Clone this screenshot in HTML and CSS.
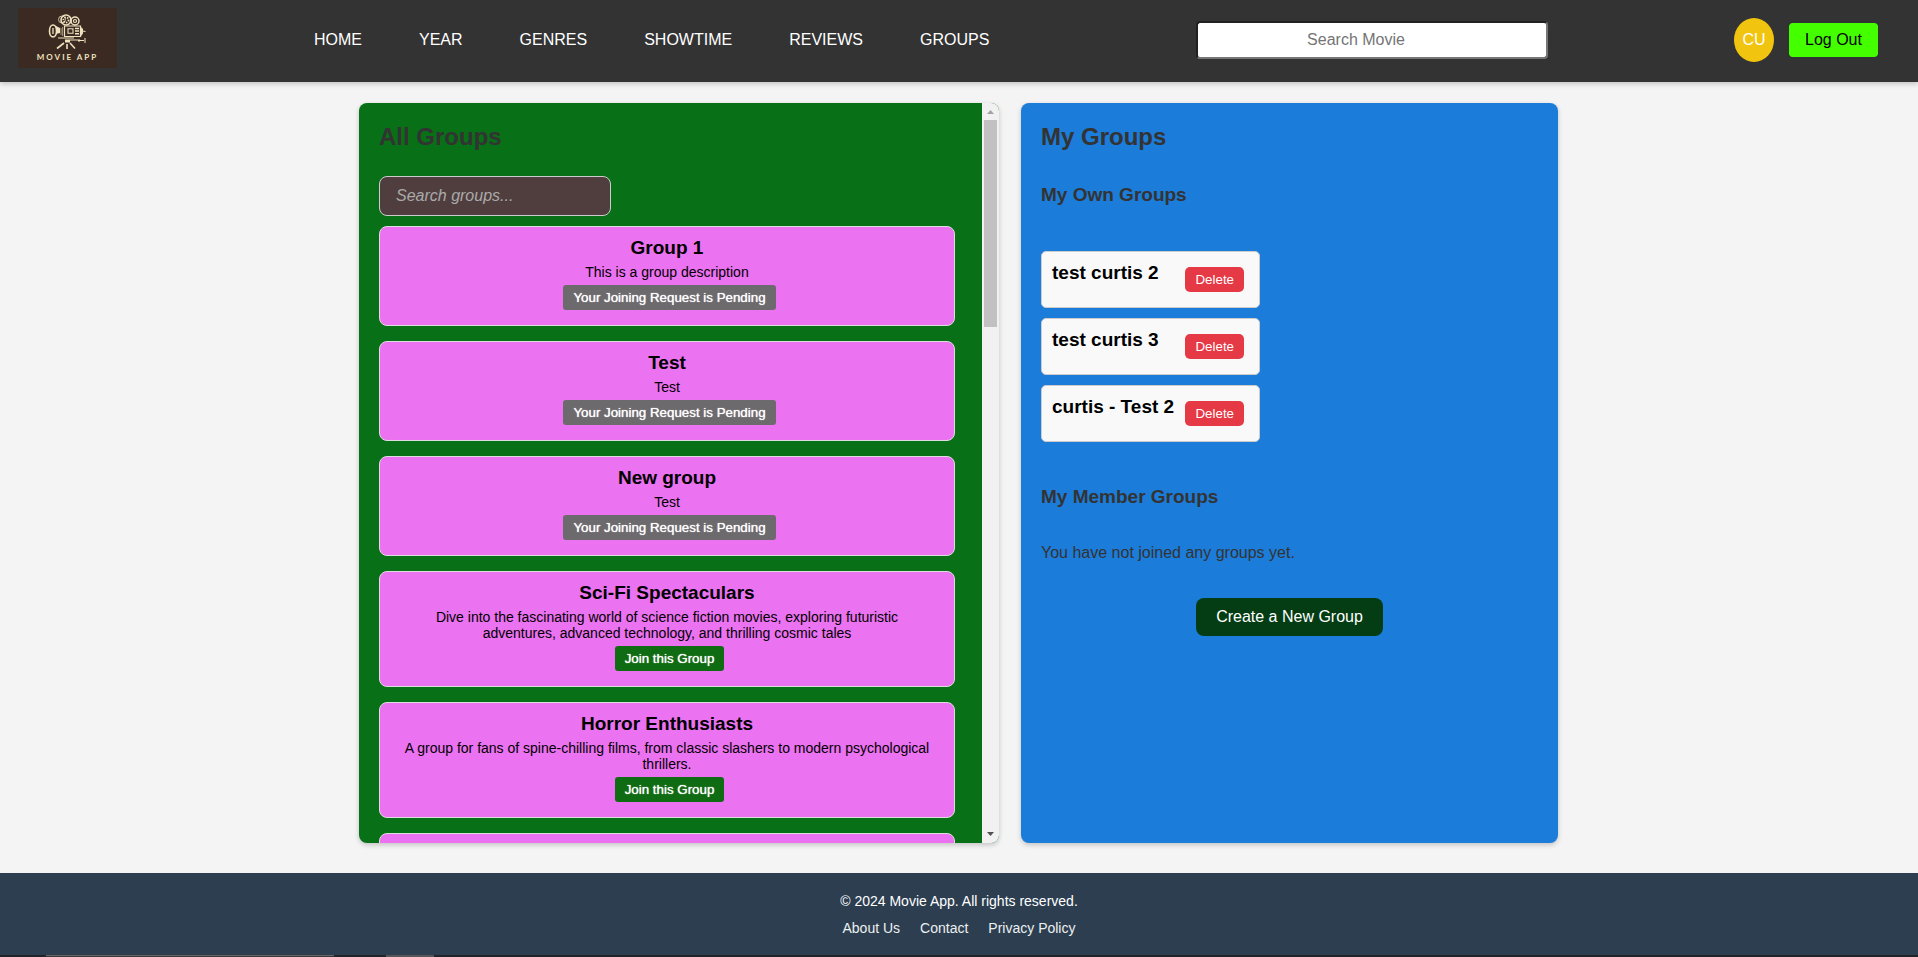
FILE: index.html
```html
<!DOCTYPE html>
<html lang="en">
<head>
<meta charset="utf-8">
<title>Movie App</title>
<link rel="stylesheet" href="styles.css">
</head>
<body>
<header class="header">
  <a class="logo" href="#" aria-label="Movie App home">
    <svg class="logo-mark" viewBox="0 0 40 36" fill="none" stroke="#efe2bf" aria-hidden="true">
      <circle cx="18" cy="6" r="5" stroke-width="1.6"/>
      <circle cx="18" cy="6" r="2.6" stroke-dasharray="1.4 1.2" stroke-width="1.8"/>
      <circle cx="14" cy="5.500" r="3.500" stroke-width="0.8"/>
      <circle cx="27" cy="7" r="4" stroke-width="1.500"/>
      <circle cx="27" cy="7" r="1.500" stroke-width="1.200"/>
      <ellipse cx="5" cy="17" rx="3.500" ry="6" stroke-width="1.600"/>
      <path d="M5 14v6" stroke-width="1.300"/>
      <path d="M6 11l6 3v5l-4 1c1.500-3 0-7-2-9z" fill="#efe2bf" stroke="none"/>
      <path d="M13 14v7M14.600 13v9" stroke="#a6977a" stroke-width="1"/>
      <path d="M16.500 12h16v10.500h-16z" stroke-width="1.200"/>
      <path d="M20 14.800h5v4.500h-5z" stroke-width="1.100"/>
      <path d="M27 14.500h4M27 17h4M27 19.800h4" stroke-width="1.500"/>
      <path d="M33 13.500l1.500 1.500v4.500l-1.500 2zM34.500 17l3 .5" fill="#efe2bf" stroke-width="1"/>
      <path d="M10 24h16M17 26h13M30 26.500h6M37 24v5M31 25v3" stroke-width="1"/>
      <path d="M17 26h5v2.500h-5z" fill="#efe2bf" stroke="none"/>
      <path d="M16 29l-7 5.500M19 30v5M22 29l5 5.500" stroke-width="1.600"/>
    </svg>
    <span class="logo-text">MOVIE APP</span>
  </a>
  <nav class="nav" aria-label="Main">
    <a href="#">HOME</a>
    <a href="#">YEAR</a>
    <a href="#">GENRES</a>
    <a href="#">SHOWTIME</a>
    <a href="#">REVIEWS</a>
    <a href="#">GROUPS</a>
  </nav>
  <input class="movie-search" type="text" placeholder="Search Movie" aria-label="Search Movie">
  <div class="account">
    <span class="avatar">CU</span>
    <button class="logout" type="button">Log Out</button>
  </div>
</header>

<main class="main">
  <section class="panel panel-all">
    <div class="panel-scroll">
      <h2>All Groups</h2>
      <input class="group-search" type="text" placeholder="Search groups..." aria-label="Search groups">
      <ul class="groups">
        <li class="group">
          <h3>Group 1</h3>
          <p>This is a group description</p>
          <button class="join pending" type="button">Your Joining Request is Pending</button>
        </li>
        <li class="group">
          <h3>Test</h3>
          <p>Test</p>
          <button class="join pending" type="button">Your Joining Request is Pending</button>
        </li>
        <li class="group">
          <h3>New group</h3>
          <p>Test</p>
          <button class="join pending" type="button">Your Joining Request is Pending</button>
        </li>
        <li class="group">
          <h3>Sci-Fi Spectaculars</h3>
          <p>Dive into the fascinating world of science fiction movies, exploring futuristic adventures, advanced technology, and thrilling cosmic tales</p>
          <button class="join" type="button">Join this Group</button>
        </li>
        <li class="group">
          <h3>Horror Enthusiasts</h3>
          <p>A group for fans of spine-chilling films, from classic slashers to modern psychological thrillers.</p>
          <button class="join" type="button">Join this Group</button>
        </li>
        <li class="group group-blank"></li>
      </ul>
    </div>
    <div class="scrollbar" aria-hidden="true">
      <svg class="arrow" viewBox="0 0 17 17"><path d="M5 11l3.500-4 3.500 4z" fill="#a3a3a3"/></svg>
      <div class="thumb"></div>
      <svg class="arrow arrow-down" viewBox="0 0 17 17"><path d="M5 6l3.500 4L12 6z" fill="#505050"/></svg>
    </div>
  </section>

  <section class="panel panel-mine">
    <h2>My Groups</h2>
    <h3>My Own Groups</h3>
    <ul class="own">
      <li class="own-item"><h4>test curtis 2</h4><button class="delete" type="button">Delete</button></li>
      <li class="own-item"><h4>test curtis 3</h4><button class="delete" type="button">Delete</button></li>
      <li class="own-item"><h4>curtis - Test 2</h4><button class="delete" type="button">Delete</button></li>
    </ul>
    <h3>My Member Groups</h3>
    <p class="empty">You have not joined any groups yet.</p>
    <button class="create" type="button">Create a New Group</button>
  </section>
</main>

<footer class="footer">
  <p>© 2024 Movie App. All rights reserved.</p>
  <nav class="footer-links" aria-label="Footer">
    <a href="#">About Us</a>
    <a href="#">Contact</a>
    <a href="#">Privacy Policy</a>
  </nav>
</footer>
<div class="taskbar" aria-hidden="true"><span class="task-search"></span><span class="task-item"></span></div>
</body>
</html>
```

FILE: styles.css
```css
* {
  box-sizing: border-box;
}

body {
  margin: 0;
  min-height: 100vh;
  display: flex;
  flex-direction: column;
  background: #f4f4f4;
  color: #333;
  font-family: "Liberation Sans", Arial, sans-serif;
  font-size: 16px;
}

h2, h3, h4, p, ul {
  margin: 0;
  padding: 0;
}

h3, h4 {
  font-size: 19px;
  line-height: 22px;
}

ul {
  list-style: none;
}

a {
  color: inherit;
  text-decoration: none;
}

button {
  border: 0;
  color: #fff;
  font-family: inherit;
  cursor: pointer;
}

/* Header */
.header {
  display: flex;
  align-items: flex-start;
  padding: 8px 40px 14px 18px;
  background: #333;
  color: #fff;
  box-shadow: 0 2px 5px rgba(0, 0, 0, 0.2);
}

.logo {
  display: flex;
  flex-direction: column;
  align-items: center;
  width: 99px;
  height: 60px;
  padding-top: 6px;
  background: #3b2a21;
  color: #efe2bf;
}

.logo-mark {
  width: 40px;
  height: 36px;
}

.logo-text {
  font-family: Lato, sans-serif;
  font-size: 8px;
  font-weight: 700;
  line-height: 14px;
  letter-spacing: 2px;
}

.nav {
  display: flex;
  gap: 57px;
  margin-left: 197px;
  padding-top: 23px;
}

.movie-search {
  width: 352px;
  height: 38px;
  margin: 13px 0 0 auto;
  padding: 0 40px 0 8px;
  border: 2px inset #767676;
  border-radius: 4px;
  background: #fff;
  font: 16px "Liberation Sans", Arial, sans-serif;
  text-align: center;
}

.account {
  display: flex;
  align-items: center;
  gap: 15px;
  margin-left: 186px;
  padding-top: 10px;
}

.avatar {
  display: flex;
  align-items: center;
  justify-content: center;
  width: 40px;
  height: 44px;
  border-radius: 50%;
  background: #f1c40f;
}

.logout {
  width: 89px;
  height: 34px;
  border-radius: 4px;
  background: #4f0;
  color: #000;
  font-size: 16px;
}

/* Panels */
.main {
  flex: 1;
  display: grid;
  grid-template-columns: 640fr 537fr;
  gap: 22px;
  width: 100%;
  max-width: 1200px;
  margin: 0 auto;
  padding: 21px 1px 30px 0;
}

.panel {
  min-width: 0;
  border-radius: 8px;
  box-shadow: 0 2px 5px rgba(0, 0, 0, 0.2);
}

.panel h2 {
  font-size: 24px;
  line-height: 28px;
}

.panel-all {
  display: flex;
  overflow: hidden;
  background: #087016;
}

.panel-scroll {
  flex: 1;
  height: 740px;
  padding: 20px 27px 0 20px;
  overflow-y: auto;
  scrollbar-width: none;
}

.group-search {
  display: block;
  width: 232px;
  height: 40px;
  margin: 25px 0 10px;
  padding: 0 16px;
  border: 1px solid #ccc;
  border-radius: 8px;
  background: #503e3e;
  color: #fff;
  font: italic 16px "Liberation Sans", Arial, sans-serif;
}

.group-search::placeholder {
  color: #aaa;
}

.groups {
  display: grid;
  gap: 15px;
}

.group {
  padding: 10px 20px 15px;
  border: 1px solid #ddd;
  border-radius: 8px;
  background: #eb72f0;
  color: #000;
  text-align: center;
}

.group p {
  margin: 5px 0;
  font-size: 14px;
  line-height: 16px;
}

.group-blank {
  height: 100px;
}

.join {
  height: 25px;
  margin-left: 5px;
  padding: 0 10px;
  border-radius: 3px;
  background: #106c12;
  font-weight: 500;
  text-shadow: 0 0 1px #fff;
  vertical-align: top;
}

.pending {
  background: #6c6a6c;
}

.scrollbar {
  display: flex;
  flex-direction: column;
  align-items: center;
  width: 17px;
  background: #f1f1f1;
}

.arrow {
  width: 17px;
  height: 17px;
}

.arrow-down {
  margin-top: auto;
}

.thumb {
  width: 13px;
  height: 28%;
  background: #c1c1c1;
}

.panel-mine {
  display: flex;
  flex-direction: column;
  align-items: flex-start;
  padding: 20px;
  background: #1c7cd9;
}

.panel-mine h3 {
  margin-top: 33px;
}

.own {
  display: grid;
  gap: 10px;
  margin: 45px 0 11px;
}

.own-item {
  display: flex;
  justify-content: space-between;
  gap: 9px;
  min-width: 219px;
  height: 57px;
  padding: 10px 15px 10px 10px;
  border: 1px solid #ccc;
  border-radius: 5px;
  background: #f9f9f9;
  color: #000;
}

.delete {
  height: 25px;
  margin-top: 5px;
  padding: 0 10px;
  border-radius: 5px;
  background: #e63946;
}

.empty {
  margin-top: 36px;
  line-height: 18px;
}

.create {
  align-self: center;
  height: 38px;
  margin-top: 36px;
  padding: 0 20px;
  border-radius: 8px;
  background: #043d14;
  font-size: 16px;
}

/* Footer */
.footer {
  display: flex;
  flex-direction: column;
  align-items: center;
  gap: 11px;
  padding: 20px 0 19px;
  background: #2c3e50;
  color: #fff;
  font-size: 14px;
  line-height: 16px;
}

.footer-links {
  display: flex;
  gap: 20px;
  color: #ecf0f1;
}

.taskbar {
  display: flex;
  gap: 52px;
  height: 2px;
  padding-left: 46px;
  background: #20242a;
}

.task-search {
  width: 288px;
  background: #3b3839;
  border-top: 1px solid #666;
}

.task-item {
  width: 48px;
  background: #55565a;
}
```
